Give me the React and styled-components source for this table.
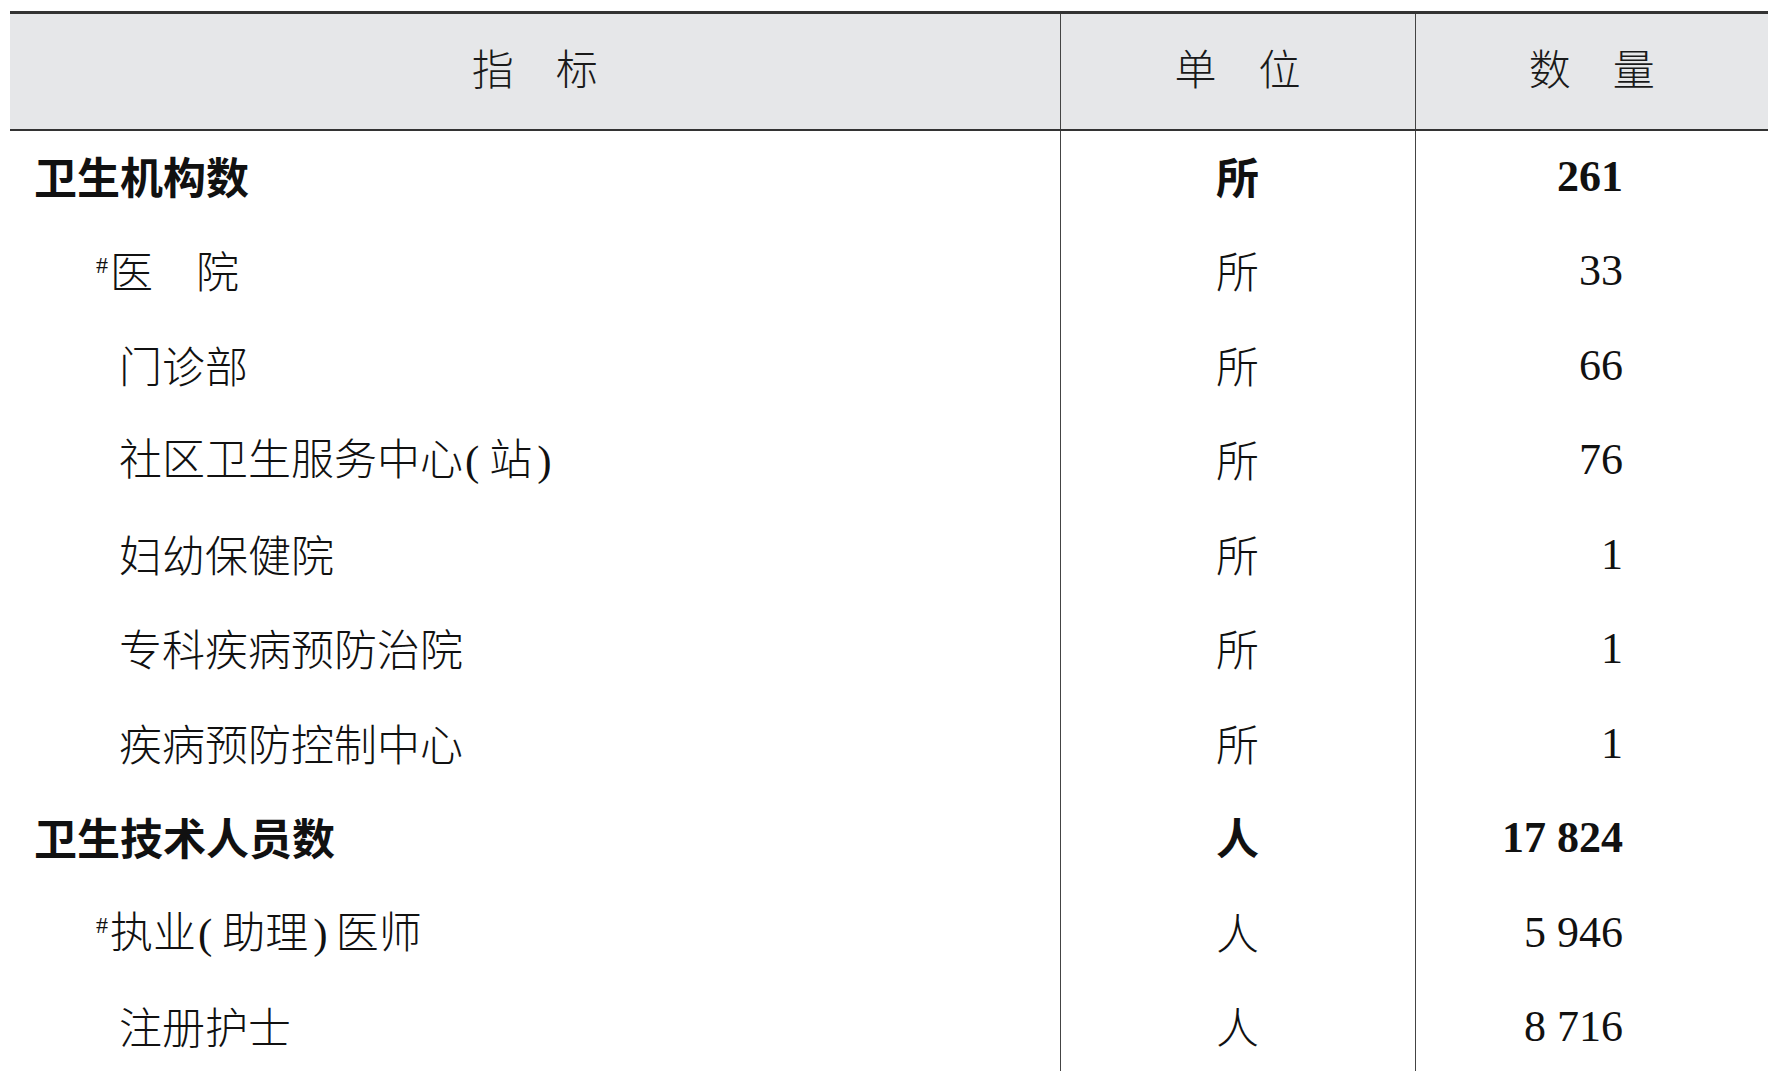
import React from "react";
import styled, { createGlobalStyle } from "styled-components";

const Global = createGlobalStyle`
  html, body {
    margin: 0;
    padding: 0;
    background: #ffffff;
  }
  body {
    font-family: "Liberation Serif", "Noto Sans CJK SC", serif;
    color: #111;
  }
`;

const Page = styled.div`
  padding: 11px 0 0 10px;
  height: 1060px;
  overflow: hidden;
`;

const Table = styled.table`
  width: 1758px;
  border-collapse: collapse;
  table-layout: fixed;
  border-top: 3px solid #333;
`;

const Head = styled.th`
  height: 117px;
  box-sizing: border-box;
  background: #e6e7e9;
  border-bottom: 2px solid #333;
  border-left: ${({ first }) => (first ? "none" : "1.5px solid #444")};
  font-family: "Noto Sans CJK SC", sans-serif;
  font-weight: 300;
  font-size: 42px;
  color: #1a1a1a;
  padding: 0 0 8px 0;
  text-align: center;
  white-space: pre;
  line-height: 1;
`;

const Cell = styled.td`
  height: 94.5px;
  box-sizing: border-box;
  padding: 0 ${({ num }) => (num ? "145px" : 0)} ${({ num }) => (num ? 0 : "3px")}
    ${({ indent }) => indent || 0}px;
  border-left: ${({ first }) => (first ? "none" : "1.5px solid #444")};
  font-size: ${({ num }) => (num ? "44px" : "43px")};
  font-weight: ${({ bold }) => (bold ? 700 : 300)};
  font-family: ${({ num }) =>
    num ? `"Liberation Serif", serif` : `"Noto Sans CJK SC", sans-serif`};
  text-align: ${({ align }) => align || "left"};
  white-space: pre;
  vertical-align: middle;
  color: #111;
  line-height: 1;
`;

const Label = styled.span`
  font-family: "Noto Sans CJK SC", sans-serif;
  font-weight: ${({ bold }) => (bold ? 700 : 300)};
`;

const Mark = styled.sup`
  font-family: "Liberation Serif", serif;
  font-size: 24px;
  font-weight: 400;
  vertical-align: 15px;
  line-height: 0;
  margin-right: 2px;
`;

const Paren = styled.span`
  font-family: "Liberation Serif", serif;
  font-weight: 400;
  margin: ${({ side }) => (side === "open" ? "0 10px 0 2px" : "0 8px 0 5px")};
`;

const rows = [
  { label: ["卫生机构数"], unit: "所", value: "261", bold: true },
  { label: ["医　院"], unit: "所", value: "33", mark: true },
  { label: ["门诊部"], unit: "所", value: "66" },
  { label: ["社区卫生服务中心", "(", "站", ")"], unit: "所", value: "76" },
  { label: ["妇幼保健院"], unit: "所", value: "1" },
  { label: ["专科疾病预防治院"], unit: "所", value: "1" },
  { label: ["疾病预防控制中心"], unit: "所", value: "1" },
  { label: ["卫生技术人员数"], unit: "人", value: "17 824", bold: true },
  { label: ["执业", "(", "助理", ")", "医师"], unit: "人", value: "5 946", mark: true },
  { label: ["注册护士"], unit: "人", value: "8 716" },
];

const renderLabel = (parts, bold) =>
  parts.map((p, i) =>
    p === "(" ? (
      <Paren key={i} side="open">(</Paren>
    ) : p === ")" ? (
      <Paren key={i} side="close">)</Paren>
    ) : (
      <Label key={i} bold={bold}>
        {p}
      </Label>
    )
  );

export default function App() {
  return (
    <>
      <Global />
      <Page>
        <Table>
          <colgroup>
            <col style={{ width: "1050px" }} />
            <col style={{ width: "355px" }} />
            <col />
          </colgroup>
          <thead>
            <tr>
              <Head first>指　标</Head>
              <Head>单　位</Head>
              <Head>数　量</Head>
            </tr>
          </thead>
          <tbody>
            {rows.map((r, i) => (
              <tr key={i}>
                <Cell first bold={r.bold} indent={r.bold ? 24 : r.mark ? 86 : 109}>
                  {r.mark && <Mark>#</Mark>}
                  {renderLabel(r.label, r.bold)}
                </Cell>
                <Cell align="center" bold={r.bold}>
                  <Label bold={r.bold}>{r.unit}</Label>
                </Cell>
                <Cell align="right" num bold={r.bold}>
                  {r.value}
                </Cell>
              </tr>
            ))}
          </tbody>
        </Table>
      </Page>
    </>
  );
}
